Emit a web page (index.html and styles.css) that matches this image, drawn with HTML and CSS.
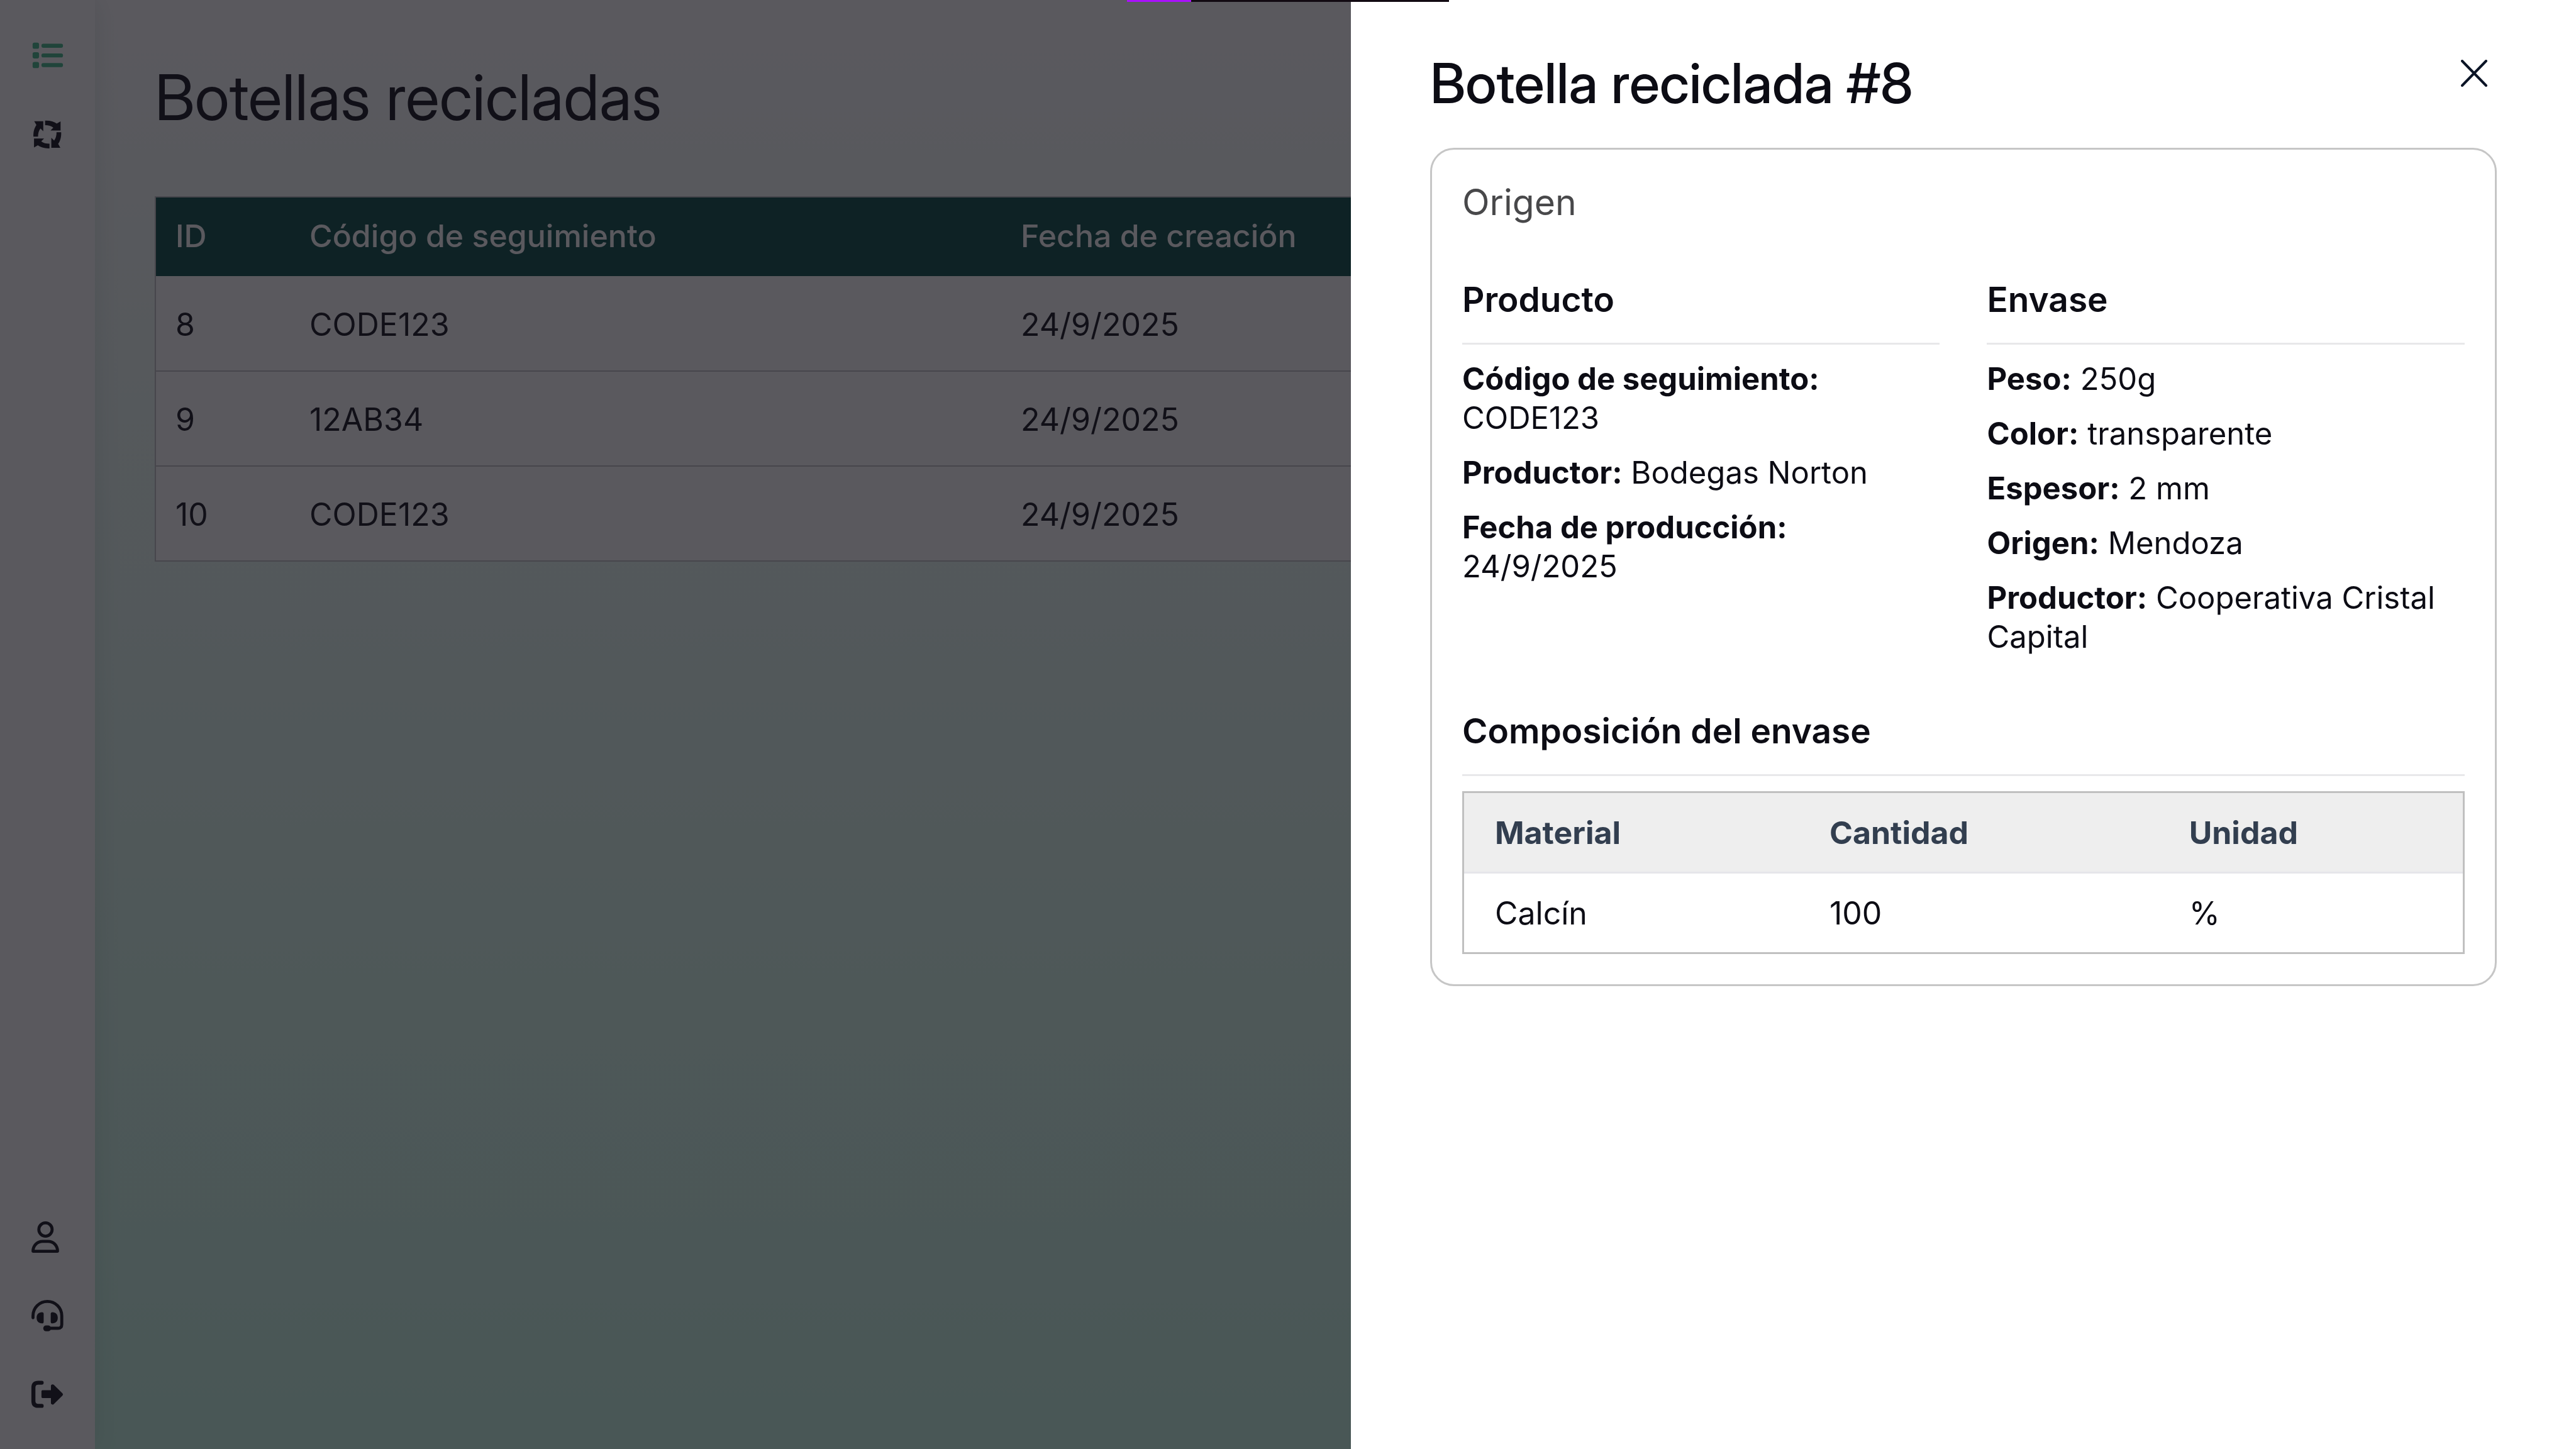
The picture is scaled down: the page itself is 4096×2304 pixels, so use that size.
FILE: index.html
```html
<!DOCTYPE html>
<html lang="es">
<head>
<meta charset="utf-8">
<meta name="viewport" content="width=device-width, initial-scale=1">
<title>Botellas recicladas</title>
<link rel="stylesheet" href="styles.css">
</head>
<body>
<div class="app">
  <nav class="sidebar" aria-label="Principal">
    <div class="nav-group">
      <a class="nav-link nav-link-active" href="#botellas" aria-label="Botellas">
        <svg class="icon" viewBox="149 188 175 175" fill="currentColor">
          <rect x="161" y="212" width="32" height="31" rx="9"/><rect x="161" y="260" width="32" height="31" rx="9"/><rect x="161" y="308" width="32" height="31" rx="9"/>
          <rect x="205" y="218" width="107" height="20" rx="9"/><rect x="205" y="266" width="107" height="20" rx="9"/><rect x="205" y="314" width="107" height="20" rx="9"/>
        </svg>
      </a>
      <a class="nav-link" href="#reciclaje" aria-label="Reciclaje">
        <svg class="icon" viewBox="149 579 175 175" fill="currentColor">
          <path id="arrow" d="M223 600C248 599 267 605 281 615L300 604V649H250L264 635C254 627 240 623 223 623Z"/>
          <use href="#arrow" transform="rotate(90 234 669)"/>
          <use href="#arrow" transform="rotate(180 234 669)"/>
          <use href="#arrow" transform="rotate(270 234 669)"/>
        </svg>
      </a>
    </div>
    <div class="nav-group">
      <a class="nav-link" href="#perfil" aria-label="Perfil">
        <svg class="icon" viewBox="149 121 175 175" fill="none" stroke="currentColor" stroke-width="15" stroke-linejoin="round">
          <circle cx="225" cy="171" r="33"/>
          <path d="M163 279C163 250 185 230 211 230H238C264 230 285 250 285 279Z"/>
        </svg>
      </a>
      <a class="nav-link" href="#soporte" aria-label="Soporte">
        <svg class="icon" viewBox="149 509 175 175" fill="none" stroke="currentColor" stroke-width="15" stroke-linecap="round">
          <path d="M163 607V597A71 71 0 0 1 306 597V640Q306 659 287 659H240"/>
          <path fill="currentColor" stroke="none" d="M216 587V627Q216 635 208 635C190 635 181 624 181 607S190 579 208 579Q216 579 216 587ZM251 587V627Q251 635 259 635C277 635 286 624 286 607S277 579 259 579Q251 579 251 587Z"/>
          <rect x="214" y="645" width="38" height="29" rx="14" fill="currentColor" stroke="none"/>
        </svg>
      </a>
      <a class="nav-link" href="#salir" aria-label="Salir">
        <svg class="icon" viewBox="149 901 175 175" fill="none" stroke="currentColor" stroke-width="20" stroke-linecap="round">
          <path d="M206 931H189Q165 931 165 955V1022Q165 1046 189 1046H206"/>
          <path fill="currentColor" stroke-width="10" stroke-linejoin="round" d="M210 973H257V946Q260 943 264 946L306 987Q308 989 306 991L264 1033Q260 1036 257 1033V1002H210Z"/>
        </svg>
      </a>
    </div>
  </nav>

  <main class="content">
    <h1 class="page-title">Botellas recicladas</h1>
    <table class="bottles">
      <thead>
        <tr><th class="col-id" scope="col">ID</th><th class="col-code" scope="col">Código de seguimiento</th><th scope="col">Fecha de creación</th></tr>
      </thead>
      <tbody>
        <tr><td>8</td><td>CODE123</td><td>24/9/2025</td></tr>
        <tr><td>9</td><td>12AB34</td><td>24/9/2025</td></tr>
        <tr><td>10</td><td>CODE123</td><td>24/9/2025</td></tr>
      </tbody>
    </table>
  </main>
</div>

<div class="backdrop"></div>

<aside class="drawer" role="dialog" aria-labelledby="drawer-title">
  <header class="drawer-header">
    <h2 class="drawer-title" id="drawer-title">Botella reciclada #8</h2>
    <button class="close" type="button" aria-label="Cerrar">
      <svg class="close-icon" viewBox="0 0 42 43" fill="none" stroke="currentColor" stroke-width="4" stroke-linecap="round"><path d="M2 2L40 41M40 2L2 41"/></svg>
    </button>
  </header>

  <section class="card">
    <h3 class="card-title">Origen</h3>
    <div class="details">
      <section>
        <h4 class="section-title">Producto</h4>
        <ul class="facts">
          <li><strong>Código de seguimiento:</strong> CODE123</li>
          <li><strong>Productor:</strong> Bodegas Norton</li>
          <li><strong>Fecha de producción:</strong> 24/9/2025</li>
        </ul>
      </section>
      <section>
        <h4 class="section-title">Envase</h4>
        <ul class="facts">
          <li><strong>Peso:</strong> 250g</li>
          <li><strong>Color:</strong> transparente</li>
          <li><strong>Espesor:</strong> 2 mm</li>
          <li><strong>Origen:</strong> Mendoza</li>
          <li><strong>Productor:</strong> Cooperativa Cristal Capital</li>
        </ul>
      </section>
    </div>
    <section>
      <h4 class="section-title">Composición del envase</h4>
      <table class="materials">
        <thead>
          <tr><th class="col-material" scope="col">Material</th><th class="col-amount" scope="col">Cantidad</th><th scope="col">Unidad</th></tr>
        </thead>
        <tbody>
          <tr><td>Calcín</td><td>100</td><td>%</td></tr>
        </tbody>
      </table>
    </section>
  </section>
</aside>

<div class="progress" role="progressbar" aria-label="Cargando" aria-valuemin="0" aria-valuemax="100" aria-valuenow="20"><div class="progress-value" style="width:20%"></div></div>
</body>
</html>
```
FILE: styles.css
```css
*,
*::before,
*::after {
  box-sizing: border-box;
}

body {
  margin: 0;
  font-family: Inter, "Liberation Sans", sans-serif;
  font-size: 50px;
  line-height: 62px;
  color: #0c0c14;
}

h1, h2, h3, h4, ul {
  margin: 0;
  padding: 0;
}

/* Page behind the drawer */
.app {
  display: flex;
  min-height: 100vh;
  background: linear-gradient(180deg, #ffffff 0%, #c5f8e3 100%);
}

.sidebar {
  flex: none;
  width: 151px;
  display: flex;
  flex-direction: column;
  justify-content: space-between;
  padding: 60px 0 59px;
  background: #ffffff;
  box-shadow: 0 0 38px rgba(0, 60, 50, 0.12);
}

.nav-group {
  display: flex;
  flex-direction: column;
  align-items: center;
  gap: 69px;
}

.nav-link {
  display: block;
  height: 56px;
  color: #0c0c14;
}

.nav-link-active {
  color: #3fb887;
}

.icon {
  display: block;
  width: 56px;
  height: 56px;
}

.content {
  flex: 1;
  padding: 95px;
}

.page-title {
  margin-bottom: 97px;
  font-family: "Inter Display", Inter, "Liberation Sans", sans-serif;
  font-size: 100px;
  line-height: 120px;
  font-weight: 400;
}

.bottles {
  width: 100%;
  table-layout: fixed;
  border-collapse: collapse;
  background: #ffffff;
  border: 2px solid #c0c0c4;
}

.bottles th,
.bottles td {
  padding: 0 31px;
  text-align: left;
}

.bottles th {
  height: 126px;
  padding-bottom: 3px;
  font-weight: 500;
  color: #ffffff;
  background: #034640;
}

.bottles td {
  height: 151px;
  padding-top: 3px;
  border-bottom: 2px solid #c0c0c4;
}

.col-id {
  width: 214px;
}

.col-code {
  width: 1131px;
}

.backdrop {
  position: fixed;
  inset: 0;
  background: rgba(20, 18, 26, 0.7);
}

/* Drawer */
.drawer {
  position: fixed;
  inset: 0 0 0 auto;
  width: 47.56%;
  padding: 80px 126px;
  background: #ffffff;
  overflow: auto;
}

.drawer-header {
  display: flex;
  justify-content: space-between;
  align-items: flex-start;
  margin-bottom: 50px;
}

.drawer-title {
  font-family: "Inter Display", Inter, "Liberation Sans", sans-serif;
  font-size: 88px;
  line-height: 105px;
  font-weight: 500;
}

.close {
  display: grid;
  place-items: center;
  width: 72px;
  height: 72px;
  padding: 0;
  border: 0;
  background: none;
  color: #0b1426;
}

.close-icon {
  width: 42px;
  height: 43px;
}

.card {
  padding: 48px;
  border: 3px solid #c6c6c6;
  border-radius: 38px;
}

.card-title {
  margin-bottom: 86px;
  font-size: 57px;
  line-height: 72px;
  font-weight: 400;
  color: #48484a;
}

.details {
  display: grid;
  grid-template-columns: 1fr 1fr;
  gap: 75px;
  margin-bottom: 86px;
}

.section-title {
  margin-bottom: 24px;
  padding-bottom: 36px;
  border-bottom: 3px solid #e8e8ea;
  font-size: 55px;
  line-height: 65px;
  font-weight: 600;
}

.facts {
  display: flex;
  flex-direction: column;
  gap: 25px;
  list-style: none;
  font-size: 49px;
}

.facts strong {
  font-weight: 700;
}

.materials {
  width: 100%;
  table-layout: fixed;
  border-collapse: separate;
  border-spacing: 0;
  border: 3px solid #c0c0c0;
}

.materials th,
.materials td {
  height: 125px;
  padding: 0 49px;
  text-align: left;
}

.materials th {
  height: 128px;
  font-weight: 700;
  color: #323e4f;
  background: #eeeeee;
  border-bottom: 3px solid #e6e6ea;
}

.col-material {
  width: 33.5%;
}

.col-amount {
  width: 36%;
}

/* Loading indicator over the top edge */
.progress {
  position: fixed;
  top: 0;
  left: 50%;
  width: 512px;
  height: 3px;
  margin-left: -256px;
  background: #120a12;
}

.progress-value {
  height: 100%;
  background: #aa10ff;
}
```
